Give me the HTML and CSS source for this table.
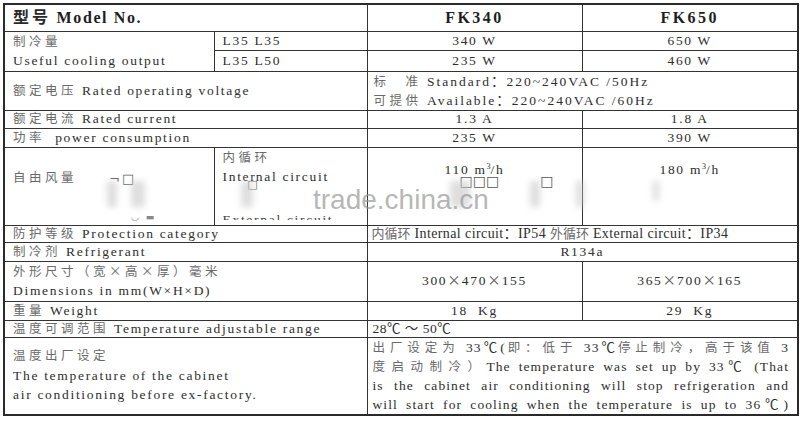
FILE: index.html
```html
<!DOCTYPE html>
<html lang="zh">
<head>
<meta charset="utf-8">
<title>FK340 / FK650</title>
<link rel="stylesheet" href="styles.css">
</head>
<body>
<div class="sheet">
<table class="spec">
  <colgroup>
    <col class="c1"><col class="c2"><col class="c3"><col class="c4">
  </colgroup>
  <tr class="r-head">
    <th colspan="2" class="left head"><span class="zhb">型号</span> Model No.</th>
    <th class="head model">FK340</th>
    <th class="head model">FK650</th>
  </tr>
  <tr class="r18">
    <td rowspan="2" class="left two"><span class="zh">制冷量</span><br>Useful cooling output</td>
    <td class="left">L35 L35</td>
    <td class="mid">340 W</td>
    <td class="mid">650 W</td>
  </tr>
  <tr class="r19">
    <td class="left">L35 L50</td>
    <td class="mid">235 W</td>
    <td class="mid">460 W</td>
  </tr>
  <tr class="r38">
    <td colspan="2" class="left"><span class="zh">额定电压</span> Rated operating voltage</td>
    <td colspan="2" class="left volt"><span class="zh">标　准</span> Standard：220~240VAC /50Hz<br><span class="zh">可提供</span> Available：220~240VAC /60Hz</td>
  </tr>
  <tr class="r18">
    <td colspan="2" class="left"><span class="zh">额定电流</span> Rated current</td>
    <td class="mid">1.3 A</td>
    <td class="mid">1.8 A</td>
  </tr>
  <tr class="r19">
    <td colspan="2" class="left"><span class="zh">功率</span>&nbsp; power consumption</td>
    <td class="mid">235 W</td>
    <td class="mid">390 W</td>
  </tr>
  <tr class="r78">
    <td class="left top air"><div class="airlabel"><span class="zh">自由风量</span><span class="glitch g1">¬□</span></div><div class="glitch g2">◡ ▬</div></td>
    <td class="left top air"><div class="clip"><span class="zh">内循环</span><br>Inte<span class="anchor"><span class="glitch g3">□</span></span><span class="tight">r</span>nal circuit<div class="cut">External circuit</div></div></td>
    <td class="mid top air"><div class="flow">110 m<sup>3</sup>/h</div><div class="boxes">□□□<span class="gap"></span>□</div></td>
    <td class="mid top air"><div class="flow">180 m<sup>3</sup>/h</div></td>
  </tr>
  <tr class="r17">
    <td colspan="2" class="left"><span class="zh">防护等级</span> Protection category</td>
    <td colspan="2" class="left plain"><span class="zh">内循环</span> Internal circuit：IP54 <span class="zh">外循环</span> External circuit：IP34</td>
  </tr>
  <tr class="r19">
    <td colspan="2" class="left"><span class="zh">制冷剂</span> Refrigerant</td>
    <td colspan="2" class="mid">R134a</td>
  </tr>
  <tr class="r39">
    <td colspan="2" class="left two"><span class="zh">外形尺寸（宽×高×厚）毫米</span><br>Dimensions in mm(W×H×D)</td>
    <td class="mid dim">300<span class="x">×</span>470<span class="x">×</span>155</td>
    <td class="mid dim">365<span class="x">×</span>700<span class="x">×</span>165</td>
  </tr>
  <tr class="r19">
    <td colspan="2" class="left"><span class="zh">重量</span> Weight</td>
    <td class="mid">18&nbsp; Kg</td>
    <td class="mid">29&nbsp; Kg</td>
  </tr>
  <tr class="r16">
    <td colspan="2" class="left"><span class="zh">温度可调范围</span> Temperature adjustable range</td>
    <td colspan="2" class="left range">28℃ ～ 50℃</td>
  </tr>
  <tr class="r75">
    <td colspan="2" class="left two"><span class="zh">温度出厂设定</span><br>The temperature of the cabinet<br>air conditioning before ex-factory.</td>
    <td colspan="2" class="left just">
      <div class="jl"><span class="zh">出厂设定为</span> 33℃(<span class="zh">即：低于</span> 33℃<span class="zh">停止制冷，高于该值</span> 3</div>
      <div class="jl"><span class="zh">度启动制冷）</span>The temperature was set up by 33℃ (That</div>
      <div class="jl">is the cabinet air conditioning will stop refrigeration and</div>
      <div class="jl">will start for cooling when the temperature is up to 36℃)</div>
    </td>
  </tr>
</table>
<div class="blob b1"></div>
<div class="blob b2"></div>
<div class="blob b3"></div>
<div class="blob b4"></div>
<div class="blob b5"></div>
<div class="blob b6"></div>
<div class="blob b7"></div>
<div class="watermark">trade.china.cn</div>
</div>
</body>
</html>
```
FILE: styles.css
```css
html, body {
  margin: 0;
  padding: 0;
  background: #ffffff;
}
body {
  padding: 3px;
}
.sheet {
  position: relative;
  width: 794px;
}
.spec {
  width: 794px;
  table-layout: fixed;
  border-collapse: collapse;
  border: 2px solid #2a2a2a;
  font-family: "Liberation Serif", "Noto Sans CJK SC", serif;
  font-size: 13.5px;
  color: #2e2e2e;
  letter-spacing: 1.7px;
}
.c1 { width: 210px; }
.c2 { width: 153px; }
.c3 { width: 215px; }
.c4 { width: 216px; }
.spec th, .spec td {
  border: 1px solid #333;
  padding: 0 8px;
  line-height: 16px;
  vertical-align: middle;
  white-space: nowrap;
  overflow: hidden;
}
.spec .r-head { height: 27px; }
.spec .r16 { height: 17px; }
.spec .r17 { height: 17px; }
.spec .r18 { height: 18px; }
.spec .r19 { height: 19px; }
.spec .r38 { height: 38px; }
.spec .r39 { height: 40px; }
.spec .r75 { height: 76px; }
.spec .r78 { height: 78px; }
.spec .left { text-align: left; }
.spec .mid { text-align: center; }
.spec .top { vertical-align: top; }
.spec .two { line-height: 19.5px; }
.spec .head {
  font-size: 16px;
  font-weight: bold;
  color: #1e1e1e;
  letter-spacing: 1.6px;
}
.spec .model { letter-spacing: 2.5px; }
.zh {
  font-family: "Noto Sans CJK SC", sans-serif;
  font-size: 12.5px;
  line-height: 0;
  color: #6a6a6a;
  letter-spacing: 3.5px;
}
.zhb {
  font-family: "Noto Sans CJK SC", sans-serif;
  font-size: 16px;
  line-height: 0;
  font-weight: bold;
  color: #2a2a2a;
  letter-spacing: 3px;
}
.spec .volt {
  padding-left: 6px;
  letter-spacing: 2px;
  line-height: 19px;
}
.spec .plain {
  letter-spacing: 0.4px;
  padding-left: 4px;
  font-size: 14px;
}
.spec .plain .zh { letter-spacing: 0; font-size: 13px; }
.spec .air { line-height: 19px; }
.airlabel {
  margin-top: 20px;
}
.glitch {
  color: #666;
  font-family: "DejaVu Sans", sans-serif;
  font-size: 13px;
  line-height: 0;
  letter-spacing: 2px;
}
.g1 {
  margin-left: 32px;
  position: relative;
  top: 1px;
}
.g2 {
  display: block;
  margin-top: 30px;
  margin-left: 118px;
  font-size: 9px;
  color: #888;
}
.anchor {
  display: inline-block;
  width: 0;
  position: relative;
}
.g3 {
  position: absolute;
  left: -3px;
  top: 4px;
  font-size: 11px;
}
.clip {
  position: relative;
  height: 76px;
  overflow: hidden;
}
.tight { letter-spacing: 1px; }
.cut {
  height: 10px;
  overflow: hidden;
  margin-top: 24px;
  color: #444;
}
.flow {
  margin-top: 12px;
}
.flow sup {
  font-size: 8px;
  line-height: 0;
  letter-spacing: 0;
}
.boxes {
  font-family: "DejaVu Sans", sans-serif;
  font-size: 14px;
  color: #555;
  letter-spacing: 0;
  line-height: 12px;
  margin-left: 64px;
  margin-top: -4px;
}
.gap { display: inline-block; width: 41px; }
.x {
  font-family: "Noto Sans CJK SC", sans-serif;
  line-height: 0;
  letter-spacing: 1px;
  color: #555;
}
.spec .range { padding-left: 5px; letter-spacing: 0.5px; }
.spec .just {
  padding: 0 8px 0 5px;
  white-space: normal;
}
.jl {
  text-align: justify;
  text-align-last: justify;
  letter-spacing: 1.1px;
  line-height: 19px;
  white-space: nowrap;
}
.jl .zh { letter-spacing: 3px; }
.blob {
  position: absolute;
  background: #c8c8c8;
  filter: blur(3px);
  opacity: 0.6;
  width: 10px;
  height: 26px;
  top: 178px;
}
.b1 { left: 104px; }
.b2 { left: 128px; width: 14px; }
.b3 { left: 238px; width: 12px; }
.b4 { left: 447px; width: 20px; }
.b5 { left: 527px; width: 10px; }
.b6 { left: 573px; width: 8px; }
.b7 { left: 650px; width: 6px; height: 20px; }
.watermark {
  position: absolute;
  left: 310px;
  top: 183px;
  font-family: "Liberation Sans", sans-serif;
  font-size: 28px;
  line-height: 28px;
  color: rgba(150, 150, 150, 0.7);
  letter-spacing: 0;
  white-space: nowrap;
}
```
